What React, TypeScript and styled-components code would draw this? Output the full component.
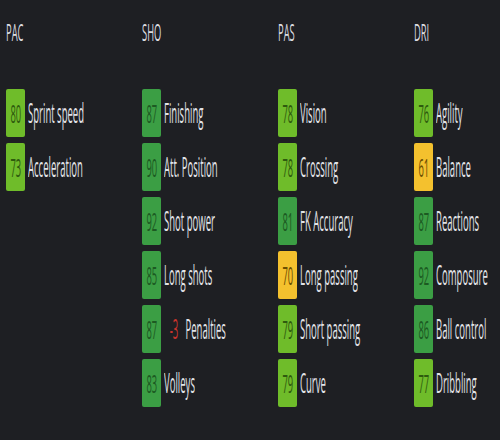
import React from "react";
import styled, { createGlobalStyle } from "styled-components";

type Tier = "high" | "mid" | "low";

interface Attr {
  value: number;
  label: string;
  tier: Tier;
  delta?: number;
}

interface Group {
  title: string;
  attrs: Attr[];
}

const groups: Group[] = [
  {
    title: "PAC",
    attrs: [
      { value: 80, label: "Sprint speed", tier: "mid" },
      { value: 73, label: "Acceleration", tier: "mid" },
    ],
  },
  {
    title: "SHO",
    attrs: [
      { value: 87, label: "Finishing", tier: "high" },
      { value: 90, label: "Att. Position", tier: "high" },
      { value: 92, label: "Shot power", tier: "high" },
      { value: 85, label: "Long shots", tier: "high" },
      { value: 87, label: "Penalties", tier: "high", delta: -3 },
      { value: 83, label: "Volleys", tier: "high" },
    ],
  },
  {
    title: "PAS",
    attrs: [
      { value: 78, label: "Vision", tier: "mid" },
      { value: 78, label: "Crossing", tier: "mid" },
      { value: 81, label: "FK Accuracy", tier: "high" },
      { value: 70, label: "Long passing", tier: "low" },
      { value: 79, label: "Short passing", tier: "mid" },
      { value: 79, label: "Curve", tier: "mid" },
    ],
  },
  {
    title: "DRI",
    attrs: [
      { value: 76, label: "Agility", tier: "mid" },
      { value: 61, label: "Balance", tier: "low" },
      { value: 87, label: "Reactions", tier: "high" },
      { value: 92, label: "Composure", tier: "high" },
      { value: 86, label: "Ball control", tier: "high" },
      { value: 77, label: "Dribbling", tier: "mid" },
    ],
  },
];

const tierColors: Record<Tier, { bg: string; fg: string }> = {
  high: { bg: "#3b9e44", fg: "#1c5a22" },
  mid: { bg: "#6fbc2a", fg: "#2e5a0e" },
  low: { bg: "#f4c12e", fg: "#6b4e00" },
};

const GlobalStyle = createGlobalStyle`
  html, body {
    margin: 0;
    padding: 0;
    background: #1e1f23;
    overflow: hidden;
  }
  body {
    font-family: "Open Sans", "Noto Sans", sans-serif;
  }
`;

const Page = styled.div`
  display: grid;
  grid-template-columns: repeat(3, 136px) 1fr;
  width: 500px;
  height: 440px;
  padding: 15px 0 0 6px;
  box-sizing: border-box;
  overflow: hidden;
  background: #1e1f23;
`;

const Column = styled.section`
  display: flex;
  flex-direction: column;
  min-width: 0;
`;

const Header = styled.div`
  height: 34px;
  font-size: 24px;
  line-height: 34px;
  color: #dcdde0;
  margin-bottom: 40px;
`;

const Squeeze = styled.span<{ $scale: number; $origin?: string }>`
  display: inline-block;
  white-space: nowrap;
  transform: scaleX(${(p) => p.$scale});
  transform-origin: ${(p) => p.$origin || "left center"};
`;

const List = styled.div`
  display: flex;
  flex-direction: column;
  gap: 6px;
`;

const Row = styled.div`
  display: flex;
  align-items: center;
  height: 48px;
`;

const Badge = styled.div<{ $tier: Tier }>`
  flex: 0 0 19px;
  width: 19px;
  height: 48px;
  border-radius: 2px;
  display: flex;
  align-items: center;
  justify-content: center;
  background: ${(p) => tierColors[p.$tier].bg};
  color: ${(p) => tierColors[p.$tier].fg};
  font-size: 26px;
  line-height: 48px;
`;

const Label = styled.div`
  margin-left: 3px;
  font-size: 26.5px;
  line-height: 48px;
  color: #e2e3e8;
  display: flex;
  align-items: center;
`;

const Delta = styled.span`
  color: #c9342c;
  margin: 0 20px 0 16px;
`;

export default function App() {
  return (
    <>
      <GlobalStyle />
      <Page>
        {groups.map((g) => (
          <Column key={g.title}>
            <Header>
              <Squeeze $scale={0.39}>{g.title}</Squeeze>
            </Header>
            <List>
              {g.attrs.map((a) => (
                <Row key={a.label}>
                  <Badge $tier={a.tier}>
                    <Squeeze $scale={0.36} $origin="center">
                      {a.value}
                    </Squeeze>
                  </Badge>
                  <Label>
                    <Squeeze $scale={0.36}>
                      {a.delta !== undefined && <Delta>{a.delta}</Delta>}
                      {a.label}
                    </Squeeze>
                  </Label>
                </Row>
              ))}
            </List>
          </Column>
        ))}
      </Page>
    </>
  );
}
